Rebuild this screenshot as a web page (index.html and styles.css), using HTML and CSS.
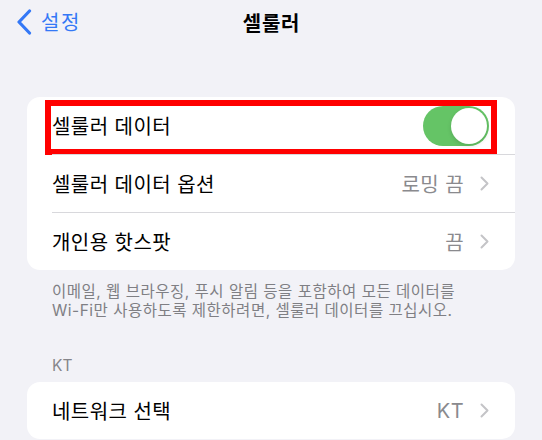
FILE: index.html
```html
<!DOCTYPE html>
<html lang="ko">
<head>
<meta charset="utf-8">
<link rel="stylesheet" href="styles.css">
</head>
<body>
<div class="screen">
  <header class="nav">
    <a class="back">
      <svg class="back-icon" width="16" height="26" viewBox="0 0 16 26"><path d="M13.5 2 L3 13 L13.5 24" fill="none" stroke="#3478f6" stroke-width="3.2" stroke-linecap="round" stroke-linejoin="round"/></svg>
      <span>설정</span>
    </a>
    <h1 class="title">셀룰러</h1>
    <span></span>
  </header>

  <div class="card card-main">
    <div class="row">
      <div class="row-content">
        <span class="label">셀룰러 데이터</span>
        <span class="toggle"><span class="knob"></span></span>
      </div>
      <div class="highlight"></div>
    </div>
    <div class="row">
      <div class="row-content">
        <span class="label">셀룰러 데이터 옵션</span>
        <span class="value">로밍 끔</span>
        <svg class="chev" width="9" height="15" viewBox="0 0 9 15"><path d="M1.5 1.5 L7.5 7.5 L1.5 13.5" fill="none" stroke="#c4c4c7" stroke-width="2" stroke-linecap="round" stroke-linejoin="round"/></svg>
      </div>
    </div>
    <div class="row">
      <div class="row-content">
        <span class="label">개인용 핫스팟</span>
        <span class="value">끔</span>
        <svg class="chev" width="9" height="15" viewBox="0 0 9 15"><path d="M1.5 1.5 L7.5 7.5 L1.5 13.5" fill="none" stroke="#c4c4c7" stroke-width="2" stroke-linecap="round" stroke-linejoin="round"/></svg>
      </div>
    </div>
  </div>

  <p class="footer">이메일, 웹 브라우징, 푸시 알림 등을 포함하여 모든 데이터를<br>Wi-Fi만 사용하도록 제한하려면, 셀룰러 데이터를 끄십시오.</p>

  <h2 class="section-header">KT</h2>

  <div class="card">
    <div class="row">
      <div class="row-content">
        <span class="label">네트워크 선택</span>
        <span class="value">KT</span>
        <svg class="chev" width="9" height="15" viewBox="0 0 9 15"><path d="M1.5 1.5 L7.5 7.5 L1.5 13.5" fill="none" stroke="#c4c4c7" stroke-width="2" stroke-linecap="round" stroke-linejoin="round"/></svg>
      </div>
    </div>
  </div>
</div>
</body>
</html>
```
FILE: styles.css
```css
* { box-sizing: border-box; }
html, body {
  margin: 0;
  padding: 0;
  background: #f2f2f7;
}
body {
  font-family: Inter, "Noto Sans CJK KR", "Noto Sans", sans-serif;
  color: #000;
  width: 542px;
  height: 440px;
  overflow: hidden;
}
.screen {
  display: flex;
  flex-direction: column;
}
.nav {
  height: 44px;
  display: grid;
  grid-template-columns: 1fr auto 1fr;
  align-items: center;
}
.back {
  display: flex;
  align-items: center;
  gap: 9px;
  padding-left: 16px;
  color: #3478f6;
  font-size: 20px;
  letter-spacing: 1.5px;
  margin-top: -1px;
}
.back-icon { display: block; }
.title {
  margin: 0;
  font-size: 20px;
  font-weight: 700;
  letter-spacing: 0.8px;
  margin-left: 1px;
}
.card {
  margin: 0 27px;
  background: #fff;
  border-radius: 13px;
  position: relative;
}
.card-main { margin-top: 53px; }
.row {
  padding-left: 25px;
  position: relative;
}
.row-content {
  display: flex;
  align-items: center;
  height: 58px;
  padding-right: 26px;
  border-top: 1px solid #d8d8dc;
}
.row:first-child .row-content {
  border-top: none;
  height: 57px;
}
.label {
  flex: 1;
  font-size: 20px;
  letter-spacing: 0.45px;
}
.value {
  font-size: 20px;
  letter-spacing: 0.45px;
  color: #8a8a8e;
  margin-right: 16px;
}
.chev { display: block; }
.toggle {
  width: 66px;
  height: 40px;
  border-radius: 20px;
  background: #65c466;
  position: relative;
  display: block;
}
.knob {
  position: absolute;
  right: 2px;
  top: 2px;
  width: 36px;
  height: 36px;
  border-radius: 50%;
  background: #fff;
  box-shadow: 0 2px 4px rgba(0,0,0,0.12);
}
.highlight {
  position: absolute;
  left: 18px;
  top: 3px;
  width: 452px;
  height: 55px;
  border: 6px solid #ff0000;
}
.footer {
  margin: 13px 0 0;
  padding: 0 20px 0 52px;
  font-size: 15.5px;
  line-height: 18.5px;
  color: #7f7f84;
  letter-spacing: 0.5px;
  white-space: nowrap;
}
.section-header {
  margin: 36px 0 0;
  padding-left: 52px;
  font-size: 15.5px;
  font-weight: 400;
  line-height: 19px;
  color: #85858a;
  height: 26px;
}
```
